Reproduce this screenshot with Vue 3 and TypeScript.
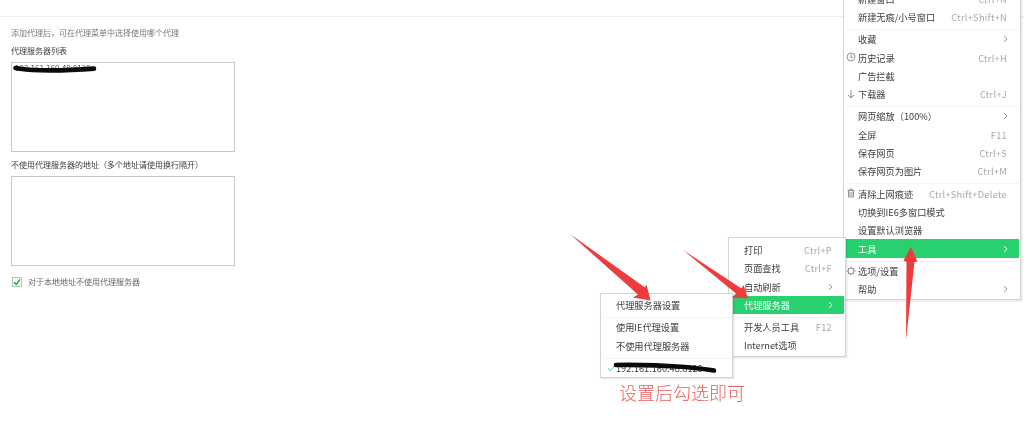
<script setup lang="ts">
interface Row { label?: string; key?: string; sub?: boolean; on?: boolean; icon?: string; sep?: boolean; tick?: boolean }

const mainMenu: Row[] = [
  { label: '新建窗口', key: 'Ctrl+N' },
  { label: '新建无痕/小号窗口', key: 'Ctrl+Shift+N' },
  { sep: true },
  { label: '收藏', sub: true },
  { label: '历史记录', key: 'Ctrl+H', icon: 'clock' },
  { label: '广告拦截' },
  { label: '下载器', key: 'Ctrl+J', icon: 'down' },
  { sep: true },
  { label: '网页缩放\uFF08100%\uFF09', sub: true },
  { label: '全屏', key: 'F11' },
  { label: '保存网页', key: 'Ctrl+S' },
  { label: '保存网页为图片', key: 'Ctrl+M' },
  { sep: true },
  { label: '清除上网痕迹', key: 'Ctrl+Shift+Delete', icon: 'trash' },
  { label: '切换到IE6多窗口模式' },
  { label: '设置默认浏览器' },
  { label: '工具', sub: true, on: true },
  { sep: true },
  { label: '选项/设置', icon: 'gear' },
  { label: '帮助', sub: true }
]
const toolsMenu: Row[] = [
  { label: '打印', key: 'Ctrl+P' },
  { label: '页面查找', key: 'Ctrl+F' },
  { label: '自动刷新', sub: true },
  { label: '代理服务器', sub: true, on: true },
  { sep: true },
  { label: '开发人员工具', key: 'F12' },
  { label: 'Internet选项' }
]
const proxyMenu: Row[] = [
  { label: '代理服务器设置' },
  { sep: true },
  { label: '使用IE代理设置' },
  { label: '不使用代理服务器' },
  { sep: true },
  { label: '192.161.160.48:8128', tick: true }
]
const menus = [
  { id: 'main', rows: mainMenu },
  { id: 'tools', rows: toolsMenu },
  { id: 'proxy', rows: proxyMenu }
]
</script>

<template>
  <div class="page">
    <div class="topbar"></div>
    <main class="form">
      <p class="hint">添加代理后&#xFF0C;可在代理菜单中选择使用哪个代理</p>
      <h3 class="label first">代理服务器列表</h3>
      <div class="box"><span class="entry">192.161.160.48:8128</span></div>
      <h3 class="label second">不使用代理服务器的地址&#xFF08;多个地址请使用换行隔开&#xFF09;</h3>
      <div class="box"></div>
      <div class="check">
        <span class="tickbox">
          <svg width="8" height="8" viewBox="0 0 8 8"><path d="M1 4.2 3.2 6.4 7 1.4" fill="none" stroke="#2f9e4f" stroke-width="1.5" /></svg>
        </span>
        <span>对于本地地址不使用代理服务器</span>
      </div>
    </main>

    <section v-for="m in menus" :key="m.id" class="menu" :class="m.id">
      <template v-for="(r, i) in m.rows" :key="i">
        <div v-if="r.sep" class="sep"></div>
        <div v-else class="row" :class="{ on: r.on }">
          <svg v-if="r.icon" class="ico" width="10" height="10" viewBox="0 0 10 10" fill="none" stroke="#777" stroke-width="0.8">
            <template v-if="r.icon === 'clock'"><circle cx="5" cy="5" r="3.9" /><path d="M5 2.6V5.4H6.8" /></template>
            <path v-else-if="r.icon === 'down'" d="M5 1V9M2 6 5 9 8 6" />
            <path v-else-if="r.icon === 'trash'" d="M1.5 2.6H8.5M3.8 2.6V1.2H6.2V2.6M2.5 2.6V9H7.5V2.6M4 4V8M6 4V8" />
            <template v-else><circle cx="5" cy="5" r="2.9" /><path d="M5 .6V2M5 8V9.4M.6 5H2M8 5H9.4M1.9 1.9 2.9 2.9M7.1 7.1 8.1 8.1M1.9 8.1 2.9 7.1M7.1 2.9 8.1 1.9" /></template>
          </svg>
          <svg v-if="r.tick" class="ico tick" width="9" height="8" viewBox="0 0 9 8"><path d="M1 4.4 3.4 6.6 8 1.2" fill="none" stroke="#5cc48a" stroke-width="1" /></svg>
          <span class="name">{{ r.label }}</span>
          <span v-if="r.key" class="key">{{ r.key }}</span>
          <svg v-if="r.sub" class="chev" width="5" height="8" viewBox="0 0 5 8"><path d="M1 1 4 4 1 7" fill="none" :stroke="r.on ? '#fff' : '#888'" stroke-width="0.9" /></svg>
        </div>
      </template>
    </section>

    <p class="note">设置后勾选即可</p>

    <svg class="marks" width="1024" height="434" viewBox="0 0 1024 434">
      <path class="ink" d="M15.5 68C22 69.4 30 70 40 70.2 55 70.6 70 70.4 94 68.6" />
      <path class="ink" d="M616 365C640 364.6 665 365.6 685 367 695 368 705 369 714 370.5" />
      <polygon class="red" points="570,234 645,287.5 646.5,284.5 650.5,300.5 633,297.5 638,294.5" />
      <polygon class="red" points="683,250 741.5,288.5 743.5,285 748,298.5 732,297.5 736,293.5" />
      <polygon class="red" points="906,340 914.5,262 917.5,261.5 911,247 903.5,260.5 906.5,262" />
    </svg>
  </div>
</template>

<style scoped>
.page {
  position: relative;
  width: 1024px;
  height: 434px;
  overflow: hidden;
  background: #fff;
  font-family: "Noto Sans CJK SC", sans-serif;
  filter: blur(0.35px);
}
.topbar {
  height: 16px;
  border-bottom: 1px solid #efefef;
}
.form {
  padding: 0 11px;
  font-size: 8px;
  line-height: 12px;
  color: #777;
}
.hint {
  margin: 10px 0 0;
}
.label {
  margin: 0;
  font-size: 8px;
  font-weight: 400;
  color: #3c3c3c;
}
.first { margin-top: 6px; }
.second { margin-top: 7px; }
.box {
  box-sizing: border-box;
  width: 224px;
  height: 90px;
  margin-top: 5px;
  padding: 0 3px;
  border: 1px solid #c9c9c9;
  color: #555;
}
.entry {
  display: block;
  line-height: 10px;
}
.check {
  display: flex;
  align-items: center;
  gap: 6px;
  margin-top: 10px;
  padding-left: 1px;
  color: #666;
}
.tickbox {
  display: flex;
  align-items: center;
  justify-content: center;
  box-sizing: border-box;
  width: 10px;
  height: 10px;
  border: 1px solid #a9cdb3;
  background: #f6fbf7;
}
.menu {
  position: absolute;
  box-sizing: border-box;
  background: #fff;
  border: 1px solid #d4d4d4;
  box-shadow: 1px 1px 2px rgba(0, 0, 0, 0.12);
  font-size: 9.2px;
  color: #3c3c3c;
}
.main {
  left: 843px;
  top: -14px;
  width: 178px;
  height: 314px;
  padding: 2.5px 1px 0 2px;
  z-index: 1;
}
.tools {
  left: 728px;
  top: 237px;
  width: 118px;
  height: 120px;
  padding: 2.8px 1px 0 3px;
  z-index: 2;
}
.proxy {
  left: 600px;
  top: 293px;
  width: 133px;
  height: 85px;
  padding: 1.8px 1px 0 3px;
  z-index: 3;
}
.row {
  position: relative;
  display: flex;
  align-items: center;
  height: 18.33px;
  padding: 0 12px 0 12px;
  white-space: nowrap;
}
.row.on {
  background: #29d070;
  color: #fff;
}
.sep {
  height: 3.9px;
  border-bottom: 1px solid #f3f3f3;
  box-sizing: border-box;
}
.ico {
  position: absolute;
  left: 0;
  top: 4px;
}
.tick {
  left: 3px;
  top: 5px;
}
.name {
  flex: 1;
}
.key {
  color: #a8a8a8;
  letter-spacing: 0.3px;
}
.chev {
  margin-right: -1px;
}
.note {
  position: absolute;
  left: 619px;
  top: 380px;
  margin: 0;
  font-size: 18px;
  line-height: 24px;
  font-weight: 300;
  color: #e8605c;
}
.marks {
  position: absolute;
  left: 0;
  top: 0;
  z-index: 4;
}
.ink {
  fill: none;
  stroke: #0a0a0a;
  stroke-width: 4.6;
  stroke-linecap: round;
}
.red {
  fill: #ee3b3b;
}
</style>
